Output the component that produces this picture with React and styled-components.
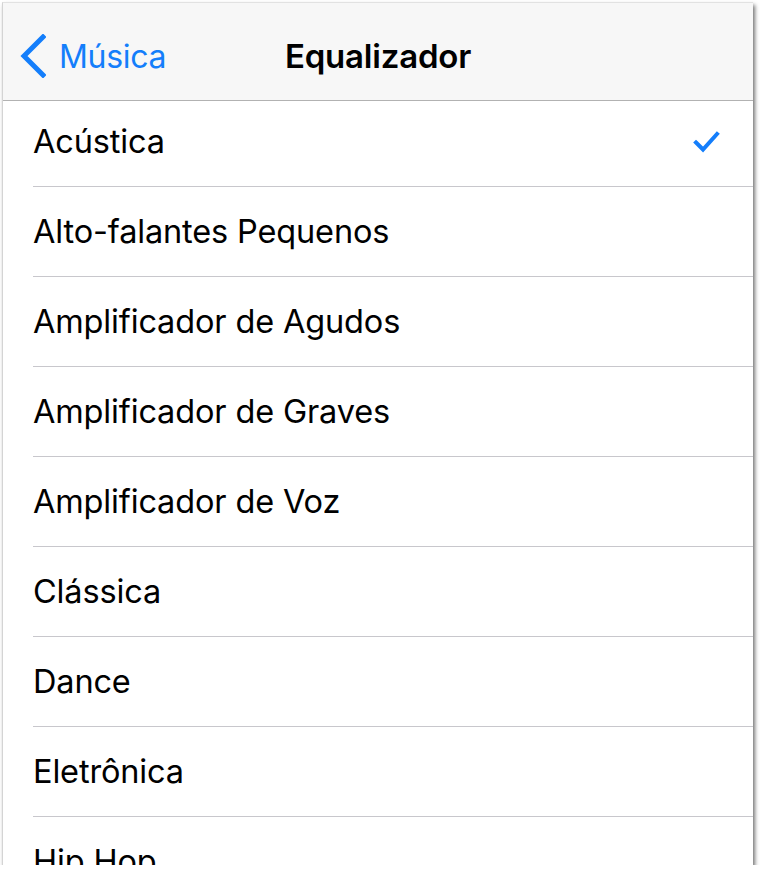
import React from "react";
import styled, { createGlobalStyle } from "styled-components";

const GlobalStyle = createGlobalStyle`
  html, body {
    margin: 0;
    padding: 0;
    background: #ffffff;
  }
  body {
    font-family: "Inter", "Liberation Sans", Arial, sans-serif;
    -webkit-font-smoothing: antialiased;
  }
`;

const Screen = styled.div`
  margin: 2px 0 0 2px;
  width: 751px;
  height: 863px;
  box-sizing: border-box;
  border-left: 1px solid #d4d4d4;
  border-top: 1px solid #e2e2e2;
  background: #ffffff;
  overflow: hidden;
  box-shadow: 2px 3px 4px rgba(0, 0, 0, 0.55);
  display: flex;
  flex-direction: column;
`;

const NavBar = styled.header`
  flex: 0 0 auto;
  height: 98px;
  background: #f7f7f7;
  border-bottom: 1px solid #b2b2b2;
  display: grid;
  grid-template-columns: 1fr auto 1fr;
  align-items: center;
  padding-top: 9px;
  box-sizing: border-box;
`;

const BackButton = styled.button`
  justify-self: start;
  display: flex;
  align-items: center;
  gap: 13px;
  padding: 0 0 0 17px;
  border: none;
  background: none;
  color: #147efb;
  font-family: inherit;
  font-size: 32px;
  letter-spacing: -0.3px;
  cursor: pointer;
`;

const Title = styled.h1`
  margin: 0;
  font-size: 33px;
  font-weight: 600;
  color: #000000;
  letter-spacing: -0.2px;
`;

const List = styled.ul`
  list-style: none;
  margin: 0;
  padding: 0 0 0 30px;
`;

const Row = styled.li`
  display: flex;
  align-items: center;
  justify-content: space-between;
  height: ${(p) => (p.$first ? "81px" : "89px")};
  padding: ${(p) => (p.$first ? "0 33px 4px 0" : "0 33px 0 0")};
  box-sizing: content-box;
  border-bottom: 1px solid #c8c7cc;
  font-size: 32.5px;
  color: #000000;
  letter-spacing: -0.15px;
`;

const Check = () => (
  <svg width="27" height="23" viewBox="0 0 27 23" aria-hidden="true">
    <path
      d="M3 12.5 L10 19.5 L24 4"
      fill="none"
      stroke="#147efb"
      strokeWidth="4"
      strokeLinecap="square"
    />
  </svg>
);

const Chevron = () => (
  <svg width="26" height="44" viewBox="0 0 26 44" aria-hidden="true">
    <path
      d="M23 3 L4 22 L23 41"
      fill="none"
      stroke="#147efb"
      strokeWidth="5"
      strokeLinecap="square"
    />
  </svg>
);

const presets = [
  "Acústica",
  "Alto-falantes Pequenos",
  "Amplificador de Agudos",
  "Amplificador de Graves",
  "Amplificador de Voz",
  "Clássica",
  "Dance",
  "Eletrônica",
  "Hip Hop",
];

const App = () => {
  const selected = "Acústica";
  return (
    <>
      <GlobalStyle />
      <Screen>
        <NavBar>
          <BackButton>
            <Chevron />
            Música
          </BackButton>
          <Title>Equalizador</Title>
        </NavBar>
        <List>
          {presets.map((name, i) => (
            <Row key={name} $first={i === 0}>
              <span>{name}</span>
              {name === selected && <Check />}
            </Row>
          ))}
        </List>
      </Screen>
    </>
  );
};

export default App;
